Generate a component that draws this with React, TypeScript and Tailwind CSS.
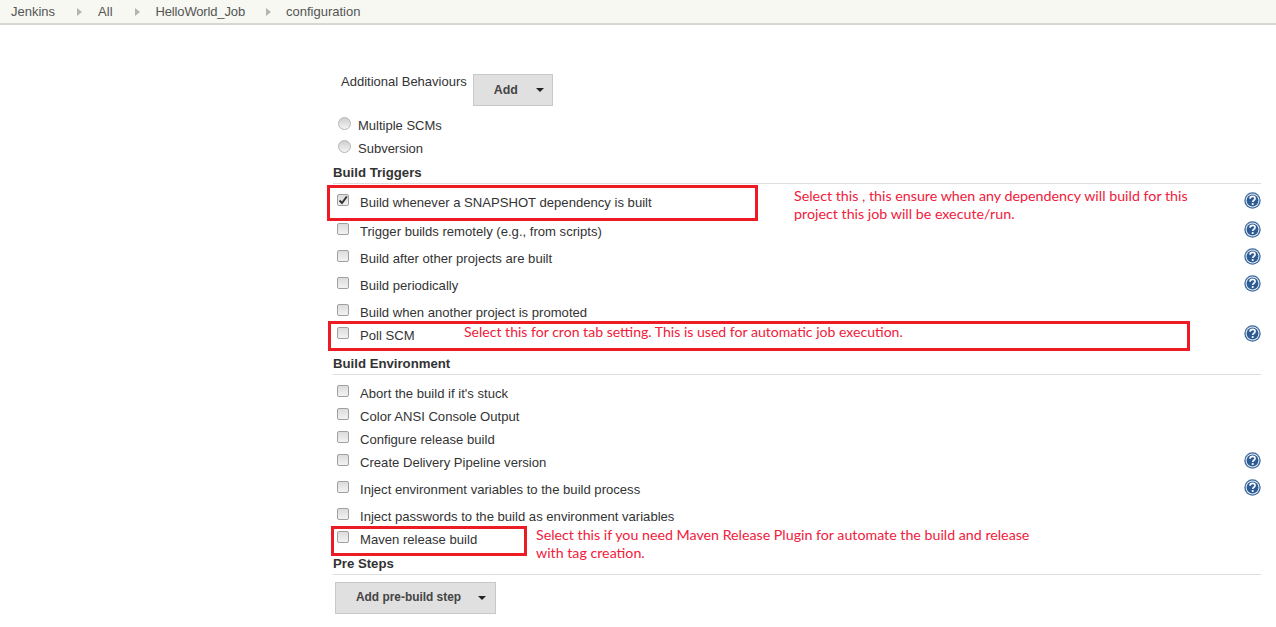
const Help = () => (
  <svg width="17" height="17" viewBox="0 0 17 17" className="relative -top-[2px] shrink-0">
    <circle cx="8.5" cy="8.5" r="8.2" fill="#3d6a9e" />
    <circle cx="8.5" cy="8.5" r="6.9" fill="#e8eef5" />
    <circle cx="8.5" cy="8.5" r="5.9" fill="#2f5b94" />
    <path d="M6 6.8c0-1.6 1.1-2.4 2.6-2.4s2.5.9 2.5 2.1c0 1.8-2.4 1.7-2.4 3.5" fill="none" stroke="#fff" strokeWidth="1.6" />
    <rect x="7.8" y="11.1" width="1.8" height="1.8" fill="#fff" />
  </svg>
);

const Check = ({ checked }: { checked?: boolean }) => (
  <span className="relative -top-[3px] flex h-[12px] w-[12px] shrink-0 items-center justify-center rounded-[2px] border border-[#a0a0a0] bg-gradient-to-b from-[#dcdcdc] to-[#f2f2f2]">
    {checked && (
      <svg width="10" height="10" viewBox="0 0 10 10">
        <path d="M1.5 5.5 4 8l4.8-6.5" fill="none" stroke="#333" strokeWidth="2" />
      </svg>
    )}
  </span>
);

const Radio = () => (
  <span className="relative -top-[2px] h-[13px] w-[13px] shrink-0 rounded-full border border-[#b5b5b5] bg-gradient-to-b from-[#cfcfcf] to-[#f4f4f4]" />
);

const Row = ({ label, mt, checked, help }: { label: string; mt: string; checked?: boolean; help?: boolean }) => (
  <div className={`flex h-[23px] items-center pl-[4px] ${mt}`}>
    <Check checked={checked} />
    <span className="ml-[11px] flex-1 text-[13.1px]">{label}</span>
    {help && <Help />}
  </div>
);

const Section = ({ title, className }: { title: string; className: string }) => (
  <div className={`h-[21px] border-b border-[#dedede] text-[13.2px] font-bold leading-[19px] ${className}`}>{title}</div>
);

const Arrow = ({ className }: { className: string }) => (
  <span className={`mt-[1px] h-0 w-0 border-y-[4px] border-l-[5px] border-y-transparent border-l-[#b4b4b4] ${className}`} />
);

const Note = ({ className, children }: { className: string; children: React.ReactNode }) => (
  <div className={`absolute font-['Lato',sans-serif] leading-[18px] text-[#f0203c] ${className}`}>{children}</div>
);

const Box = ({ className }: { className: string }) => (
  <div className={`absolute border-[3px] border-[#ed1c24] ${className}`} />
);

export default function App() {
  return (
    <div className="relative h-[627px] w-[1276px] overflow-hidden bg-white font-['Liberation_Sans',sans-serif] text-[13px] text-[#333]">
      <div className="flex h-[25px] items-center border-b-2 border-[#d8d8d2] bg-[#f6f8f1] pl-[11px] text-[#555]">
        <span>Jenkins</span>
        <Arrow className="ml-[22px] mr-[16px]" />
        <span>All</span>
        <Arrow className="ml-[22px] mr-[16px]" />
        <span className="tracking-[-0.15px]">HelloWorld_Job</span>
        <Arrow className="ml-[21px] mr-[15px]" />
        <span>configuration</span>
      </div>

      <div className="ml-[333px] mr-[15px] flex flex-col">
        <div className="mt-[49px] flex h-[32px] items-start pl-[8px]">
          <span className="leading-[15px]">Additional Behaviours</span>
          <div className="ml-[6px] flex h-[32px] w-[80px] items-center whitespace-nowrap border border-[#c8c8c8] bg-[#e0e0e0] pl-[20px] text-[12.4px] font-bold text-[#444]">
            Add
            <span className="ml-[18px] h-0 w-0 border-x-[4px] border-t-[4px] border-x-transparent border-t-[#222]" />
          </div>
        </div>
        <div className="mt-[8px] flex h-[23px] items-center pl-[5px]">
          <Radio />
          <span className="ml-[7px]">Multiple SCMs</span>
        </div>
        <div className="flex h-[23px] items-center pl-[5px]">
          <Radio />
          <span className="ml-[7px]">Subversion</span>
        </div>

        <Section title="Build Triggers" className="mt-[3px]" />
        <Row label="Build whenever a SNAPSHOT dependency is built" mt="mt-[7px]" checked help />
        <Row label="Trigger builds remotely (e.g., from scripts)" mt="mt-[6px]" help />
        <Row label="Build after other projects are built" mt="mt-[4px]" help />
        <Row label="Build periodically" mt="mt-[4px]" help />
        <Row label="Build when another project is promoted" mt="mt-[4px]" />
        <Row label="Poll SCM" mt="mt-0" help />

        <Section title="Build Environment" className="mt-[7px]" />
        <Row label="Abort the build if it's stuck" mt="mt-[7px]" />
        <Row label="Color ANSI Console Output" mt="mt-0" />
        <Row label="Configure release build" mt="mt-0" />
        <Row label="Create Delivery Pipeline version" mt="mt-0" help />
        <Row label="Inject environment variables to the build process" mt="mt-[4px]" help />
        <Row label="Inject passwords to the build as environment variables" mt="mt-[4px]" />
        <Row label="Maven release build" mt="mt-0" />

        <Section title="Pre Steps" className="mt-[3px]" />
        <div className="ml-[2px] mt-[7px] flex h-[32px] w-[161px] items-center whitespace-nowrap border border-[#c8c8c8] bg-[#e0e0e0] pl-[20px] text-[11.9px] font-bold text-[#444]">
          Add pre-build step
          <span className="ml-[17px] h-0 w-0 border-x-[4px] border-t-[4px] border-x-transparent border-t-[#222]" />
        </div>
      </div>

      <Box className="left-[327px] top-[185px] h-[36px] w-[431px]" />
      <Box className="left-[328px] top-[321px] h-[30px] w-[862px]" />
      <Box className="left-[331px] top-[526px] h-[30px] w-[196px]" />

      <Note className="left-[794px] top-[187px] w-[430px] text-[14.28px]">
        Select this , this ensure when any dependency will build for this
        <br />
        project this job will be execute/run.
      </Note>
      <Note className="left-[464px] top-[323px] w-[500px] text-[14.07px]">
        Select this for cron tab setting. This is used for automatic job execution.
      </Note>
      <Note className="left-[536px] top-[526px] w-[560px] text-[14.23px]">
        Select this if you need Maven Release Plugin for automate the build and release
        <br />
        with tag creation.
      </Note>
    </div>
  );
}
